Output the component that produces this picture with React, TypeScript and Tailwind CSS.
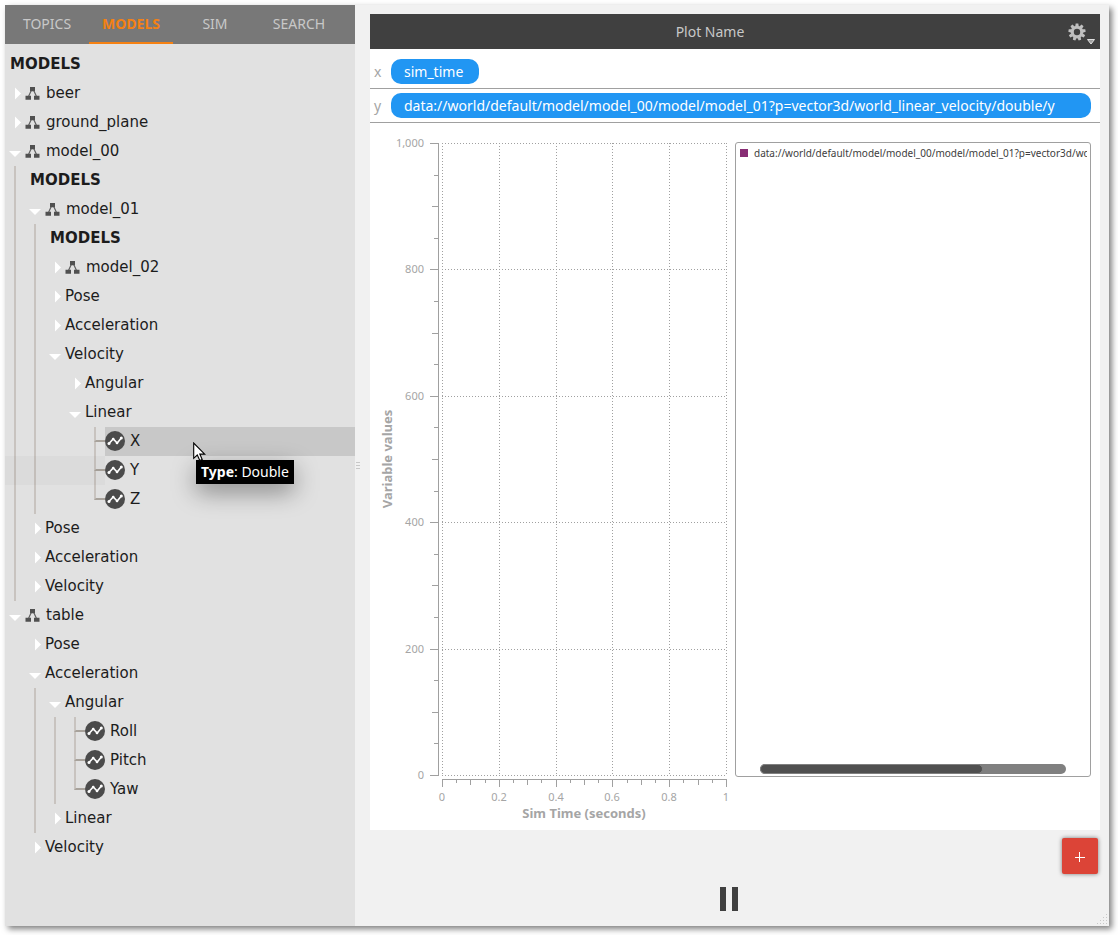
import React from "react";

type NodeData = {
  label: string;
  kind?: "header" | "model" | "group" | "leaf";
  open?: boolean;
  line?: boolean;
  hovered?: boolean;
  banded?: boolean;
  children?: NodeData[];
};

const tree: NodeData[] = [
  { label: "MODELS", kind: "header" },
  { label: "beer", kind: "model" },
  { label: "ground_plane", kind: "model" },
  {
    label: "model_00",
    kind: "model",
    open: true,
    line: true,
    children: [
      { label: "MODELS", kind: "header" },
      {
        label: "model_01",
        kind: "model",
        open: true,
        line: true,
        children: [
          { label: "MODELS", kind: "header" },
          { label: "model_02", kind: "model" },
          { label: "Pose" },
          { label: "Acceleration" },
          {
            label: "Velocity",
            open: true,
            children: [
              { label: "Angular" },
              {
                label: "Linear",
                open: true,
                children: [
                  { label: "X", kind: "leaf", hovered: true },
                  { label: "Y", kind: "leaf", banded: true },
                  { label: "Z", kind: "leaf" },
                ],
              },
            ],
          },
        ],
      },
      { label: "Pose" },
      { label: "Acceleration" },
      { label: "Velocity" },
    ],
  },
  {
    label: "table",
    kind: "model",
    open: true,
    children: [
      { label: "Pose" },
      {
        label: "Acceleration",
        open: true,
        line: true,
        children: [
          {
            label: "Angular",
            open: true,
            line: true,
            children: [
              { label: "Roll", kind: "leaf" },
              { label: "Pitch", kind: "leaf" },
              { label: "Yaw", kind: "leaf" },
            ],
          },
          { label: "Linear" },
        ],
      },
      { label: "Velocity" },
    ],
  },
];

function Arrow({ open }: { open?: boolean }) {
  return (
    <svg viewBox="0 0 20 29" className="h-[29px] w-5 shrink-0" fill="#fff" aria-hidden="true">
      {open ? <path d="M4 14h12l-6 6z" /> : <path d="M10 8.500v12l6-6z" />}
    </svg>
  );
}

function ModelIcon() {
  return (
    <svg viewBox="0 0 15 15" className="mr-1.5 h-[15px] w-[15px] shrink-0" aria-hidden="true">
      <path d="M6.500 4 3.500 10.500M8.500 4l3 6.500" stroke="#606060" strokeWidth="1.200" fill="none" />
      <path d="M5 1h5v4.300H5zM.5 9.700h5.500v4H.5zM9 9.700h5.500v4H9z" fill="#505050" />
    </svg>
  );
}

function PlotIcon() {
  return (
    <svg viewBox="0 0 20 20" className="h-5 w-5 shrink-0" aria-hidden="true">
      <circle cx="10" cy="10" r="10" fill="#4b4b4b" />
      <path d="M4 12.500 8.200 8l4 4L16.300 7" stroke="#fff" strokeWidth="1.600" fill="none" />
      <g fill="#fff">
        <circle cx="4" cy="12.500" r="1.500" />
        <circle cx="8.200" cy="8" r="1.300" />
        <circle cx="12" cy="12" r="1.300" />
        <circle cx="16.300" cy="7" r="1.500" />
      </g>
    </svg>
  );
}

function Cursor() {
  return (
    <svg viewBox="0 0 14 20" className="absolute top-[15px] left-[88px] z-10 h-5 w-3.5" aria-hidden="true">
      <path
        d="M.7 1v15.300l3.600-3.300 2.500 5.500 2.400-1.100-2.400-5.300h4.900z"
        fill="#fff"
        stroke="#000"
        strokeWidth="1.100"
      />
    </svg>
  );
}

function Leaf({ node, last }: { node: NodeData; last: boolean }) {
  return (
    <li className="relative flex h-[29px]">
      {node.banded && <span className="absolute top-0 right-full -mr-5 h-full w-[100px] bg-black/[0.025]" />}
      <span className="flex w-5 shrink-0 flex-col pl-[9px]">
        <span className="h-[15px] border-b-2 border-l-2 border-b-[#a8a29b] border-l-[#c8c3bf]" />
        {!last && <span className="flex-1 border-l-2 border-[#c8c3bf]" />}
      </span>
      <span
        className={
          node.hovered
            ? "relative flex flex-1 items-center gap-[5px] bg-[#c8c8c8] pb-px"
            : "flex flex-1 items-center gap-[5px] pb-px"
        }
      >
        <PlotIcon />
        {node.label}
        {node.hovered && (
          <>
            <span
              role="tooltip"
              className="absolute top-[33px] left-[91px] z-10 h-6 bg-black px-[5px] [font-family:'Noto_Sans',sans-serif] text-[14px] leading-6 whitespace-nowrap text-white shadow-[0_8px_24px_rgba(0,0,0,0.4)]"
            >
              <b>Type</b>: Double
            </span>
            <Cursor />
          </>
        )}
      </span>
    </li>
  );
}

function TreeNode({ node, last }: { node: NodeData; last: boolean }) {
  if (node.kind === "header") return <li className="flex h-[29px] items-center pl-[5px] font-bold">{node.label}</li>;
  if (node.kind === "leaf") return <Leaf node={node} last={last} />;
  return (
    <li>
      <button type="button" aria-expanded={!!node.open} className="flex h-[29px] w-full items-center">
        <Arrow open={node.open} />
        {node.kind === "model" && <ModelIcon />}
        {node.label}
      </button>
      {node.children && (
        <ul
          className={
            node.line ? "ml-[9px] border-l-2 border-[#c8c3bf] pl-[9px]" : "pl-5"
          }
        >
          {node.children.map((c, i) => (
            <TreeNode key={i} node={c} last={i === node.children!.length - 1} />
          ))}
        </ul>
      )}
    </li>
  );
}

const tabs = ["TOPICS", "MODELS", "SIM", "SEARCH"];

function Sidebar() {
  return (
    <aside className="w-[350px] shrink-0 bg-[#e1e1e1]">
      <nav className="flex h-[39px] bg-[#787878] [font-family:'Noto_Sans',sans-serif] text-[14px] text-[#c8c8c8]">
        {tabs.map((t) => (
          <button
            key={t}
            type="button"
            className={
              t === "MODELS"
                ? "w-21 border-b-2 border-[#f58113] font-bold text-[#f58113]"
                : "w-21 border-b-2 border-transparent"
            }
          >
            {t}
          </button>
        ))}
      </nav>
      <ul className="pt-1.5 [font-family:'DejaVu_Sans',Verdana,sans-serif] text-[15px] leading-[23px] text-[#1c1c1c]">
        {tree.map((n, i) => (
          <TreeNode key={i} node={n} last={false} />
        ))}
      </ul>
    </aside>
  );
}

const xs = [72, 129, 186, 242, 299, 356];
const ys = [20, 146, 273, 399, 526, 652];
const xLabels = ["0", "0.2", "0.4", "0.6", "0.8", "1"];
const yLabels = ["1,000", "800", "600", "400", "200", "0"];

function Chart() {
  const ticks = Array.from({ length: 21 }, (_, i) => i);
  return (
    <svg
      viewBox="0 0 365 707"
      className="h-[707px] w-[365px] shrink-0 text-[11px]"
      fill="#a5a5a5"
      role="img"
      aria-label="Variable values against Sim Time (seconds)"
    >
      <g stroke="#a0a0a0" strokeDasharray="1 2" shapeRendering="crispEdges">
        {ys.map((y) => (
          <path key={y} d={`M72 ${y + 0.5}H357`} />
        ))}
        {xs.map((x) => (
          <path key={x} d={`M${x + 0.5} 20V653`} />
        ))}
      </g>
      <g stroke="#a0a0a0" shapeRendering="crispEdges">
        <path d="M68.500 20V653M72 656.500H357" />
        {ticks.map((i) => {
          const y = Math.round(20 + i * 31.6) + 0.5;
          return <path key={i} d={`M${i % 4 === 0 ? 60 : i % 2 === 0 ? 62 : 64} ${y}H68`} />;
        })}
        {ticks.map((i) => {
          const x = Math.round(72 + i * 14.2) + 0.5;
          return <path key={i} d={`M${x} 657V${i % 4 === 0 ? 664 : i % 2 === 0 ? 662 : 660}`} />;
        })}
      </g>
      {yLabels.map((t, i) => (
        <text key={t} x="54" y={ys[i] + 4} textAnchor="end">
          {t}
        </text>
      ))}
      {xLabels.map((t, i) => (
        <text key={t} x={xs[i]} y="678" textAnchor="middle">
          {t}
        </text>
      ))}
      <g className="text-[13px] font-bold">
        <text x="214" y="695" textAnchor="middle">
          Sim Time (seconds)
        </text>
        <text transform="translate(22 336) rotate(-90)" textAnchor="middle">
          Variable values
        </text>
      </g>
    </svg>
  );
}

function Gear() {
  return (
    <svg viewBox="-9 -9 18 18" className="h-[18px] w-[18px]" aria-hidden="true">
      <circle r="4.700" fill="none" stroke="#c0c0c0" strokeWidth="3" />
      <g fill="#c0c0c0">
        {[0, 40, 80, 120, 160, 200, 240, 280, 320].map((a) => (
          <path key={a} d="M-1.800-5.500-1.300-8.600H1.300L1.800-5.500z" transform={`rotate(${a})`} />
        ))}
      </g>
    </svg>
  );
}

const yVariable =
  "data://world/default/model/model_00/model/model_01?p=vector3d/world_linear_velocity/double/y";

function VariableRow({ axis, value, wide }: { axis: string; value: string; wide?: boolean }) {
  return (
    <div
      className={
        wide
          ? "flex items-center border-b border-[#a0a0a0] py-1 pr-[9px] pl-1"
          : "flex items-center border-b border-[#a0a0a0] pt-2.5 pr-[9px] pb-1 pl-1"
      }
    >
      <span className="w-[17px] shrink-0 text-[#a5a5a5]">{axis}</span>
      <span
        className={
          wide
            ? "h-[25px] min-w-0 flex-1 rounded-[10px] bg-[#2196f3] pr-4 pl-[13px] leading-[25px] whitespace-nowrap text-white"
            : "h-[25px] rounded-[10px] bg-[#2196f3] pr-4 pl-[13px] leading-[25px] text-white"
        }
      >
        {value}
      </span>
    </div>
  );
}

function PlotCard() {
  return (
    <section className="bg-white">
      <header className="flex h-[35px] items-center bg-[#404040] text-[#c8c8c8]">
        <h1 className="flex-1 pr-[18px] text-center">Plot Name</h1>
        <button type="button" aria-label="Plot settings" className="flex items-center pr-[5px]">
          <Gear />
          <svg viewBox="0 0 8 6" className="mt-5 ml-px h-1.5 w-2" aria-hidden="true">
            <path d="M.5.500h7L4 5z" fill="#a0a0a0" stroke="#e0e0e0" />
          </svg>
        </button>
      </header>
      <VariableRow axis="x" value="sim_time" />
      <VariableRow axis="y" value={yVariable} wide />
      <div className="flex">
        <Chart />
        <div className="mt-[19px] mr-[9px] flex h-[635px] min-w-0 flex-1 flex-col justify-between rounded-[3px] border border-[#a0a0a0] pt-1 pr-[3px] pb-0.5 pl-1">
          <div className="flex items-center gap-1.5 overflow-hidden text-[10px] leading-[12px] whitespace-nowrap text-[#404040]">
            <span className="h-2 w-2 shrink-0 bg-[#882d74]" />
            {yVariable}
          </div>
          <div className="mr-[21px] ml-5 h-2.5 rounded-full bg-[#808080]">
            <div className="h-full w-[73%] rounded-full border border-[#808080] bg-[#505050]" />
          </div>
        </div>
      </div>
    </section>
  );
}

export default function App() {
  return (
    <div className="flex min-h-screen bg-white pt-[5px] pr-[9px] pb-[9px] pl-[5px]">
      <div className="flex min-w-0 flex-1 bg-[#f1f1f1] shadow-[3px_3px_6px_rgba(0,0,0,0.5)]">
        <Sidebar />
        <main className="relative flex min-w-0 flex-1 flex-col pt-[9px] pr-[9px] pl-[15px] [font-family:'Noto_Sans',sans-serif] text-[14px]">
          <span className="absolute top-[457px] left-px flex flex-col gap-0.5">
            <span className="h-px w-1 bg-[#c8c8c8]" />
            <span className="h-px w-1 bg-[#c8c8c8]" />
            <span className="h-px w-1 bg-[#c8c8c8]" />
          </span>
          <PlotCard />
          <button
            type="button"
            aria-label="Add plot"
            className="mt-2 mr-0.5 flex h-9 w-9 items-center justify-center self-end rounded-[2px] bg-[#dc4437] shadow-[0_0_4px_rgba(0,0,0,0.5)]"
          >
            <svg viewBox="0 0 10 10" className="mt-0.5 h-2.5 w-2.5" stroke="#fff" aria-hidden="true">
              <path d="M0 5.500h10M4.500 0v10" shapeRendering="crispEdges" />
            </svg>
          </button>
          <div className="mt-[13px] flex justify-center pr-3">
            <button type="button" aria-label="Pause" className="flex gap-1.5">
              <span className="h-6 w-1.5 bg-[#404040]" />
              <span className="h-6 w-1.5 bg-[#404040]" />
            </button>
          </div>
          <svg viewBox="0 0 12 12" className="absolute right-px bottom-px h-3 w-3" fill="#c8c8c8" aria-hidden="true">
            <path d="M10 1h1v1h-1zM10 4h1v1h-1zM7 4h1v1H7zM10 7h1v1h-1zM7 7h1v1H7zM4 7h1v1H4zM10 10h1v1h-1zM7 10h1v1H7zM4 10h1v1H4zM1 10h1v1H1z" />
          </svg>
        </main>
      </div>
    </div>
  );
}
